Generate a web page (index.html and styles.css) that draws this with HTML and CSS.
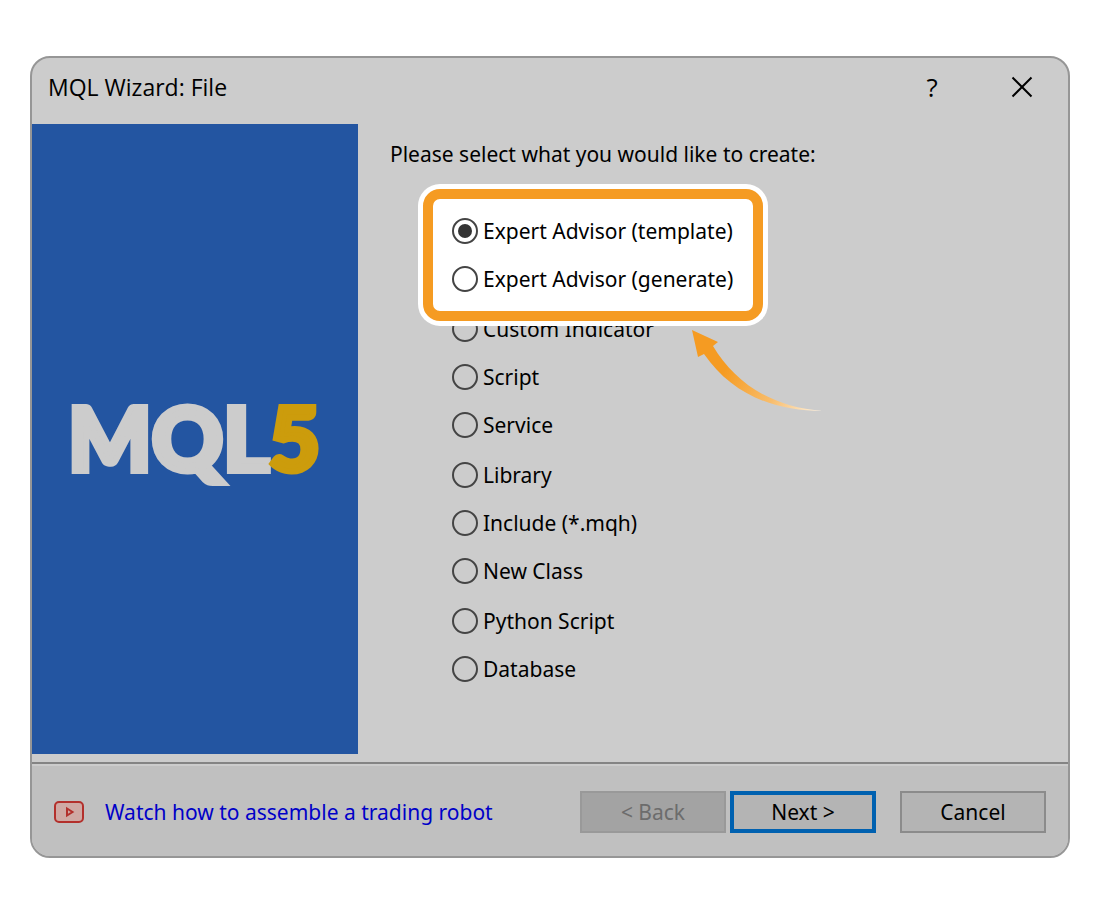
FILE: index.html
```html
<!DOCTYPE html>
<html lang="en">
<head>
    <meta charset="UTF-8">
    <meta name="viewport" content="width=device-width, initial-scale=1.0">
    <title>MQL Wizard: File</title>
    <link rel="stylesheet" href="styles.css">
</head>
<body>
    <form class="wizard">
        <header class="title-bar">
            <h1>MQL Wizard: File</h1>
            <button type="button" class="title-button help">?</button>
            <button type="button" class="title-button" aria-label="Close">
                <svg width="22" height="22" viewBox="0 0 22 22"><path d="M1.500 1.500L20.500 20.500M20.500 1.500L1.500 20.500" stroke="#000" stroke-width="2"/></svg>
            </button>
        </header>

        <main class="content">
            <div class="banner">
                <svg class="logo" viewBox="0 0 248 76" role="img" aria-label="MQL5">
                    <text class="logo-text" x="-3" y="70">MQL<tspan class="logo-five">5</tspan></text>
                </svg>
            </div>

            <fieldset class="choices">
                <legend>Please select what you would like to create:</legend>
                <div class="options">
                    <div class="highlighted">
                        <label class="option"><input type="radio" name="kind" checked>Expert Advisor (template)</label>
                        <label class="option"><input type="radio" name="kind">Expert Advisor (generate)</label>
                    </div>
                    <div class="others">
                        <label class="option"><input type="radio" name="kind">Custom Indicator</label>
                        <label class="option"><input type="radio" name="kind">Script</label>
                        <label class="option"><input type="radio" name="kind">Service</label>
                        <label class="option"><input type="radio" name="kind">Library</label>
                        <label class="option"><input type="radio" name="kind">Include (*.mqh)</label>
                        <label class="option"><input type="radio" name="kind">New Class</label>
                        <label class="option"><input type="radio" name="kind">Python Script</label>
                        <label class="option"><input type="radio" name="kind">Database</label>
                    </div>
                    <svg class="arrow" width="132" height="82" viewBox="0 0 132 82" aria-hidden="true">
                        <defs>
                            <linearGradient id="fade" gradientUnits="userSpaceOnUse" x1="10" y1="10" x2="130" y2="82">
                                <stop offset="0.25" stop-color="#f59b22"/>
                                <stop offset="0.65" stop-color="#f8bd6c"/>
                                <stop offset="1" stop-color="#fff4e4"/>
                            </linearGradient>
                        </defs>
                        <path d="M0 0L26 12L21 16C42 51 77 77 131 81C80 81 39 63 12 24L6 27Z" fill="url(#fade)"/>
                    </svg>
                </div>
            </fieldset>
        </main>

        <footer class="footer">
            <svg width="30" height="22" viewBox="0 0 30 22" aria-hidden="true">
                <rect x="1" y="1" width="28" height="20" rx="4" fill="#cfa9a4" stroke="#b3302c" stroke-width="2"/>
                <path d="M13 7.500V14.500L18.500 11Z" fill="#cfa9a4" stroke="#b3302c" stroke-width="2"/>
            </svg>
            <a href="#">Watch how to assemble a trading robot</a>
            <div class="buttons">
                <button type="button" disabled>&lt; Back</button>
                <button type="submit" class="next">Next &gt;</button>
                <button type="button" class="cancel">Cancel</button>
            </div>
        </footer>
    </form>
</body>
</html>
```

FILE: styles.css
```css
* {
    box-sizing: border-box;
}

body {
    margin: 56px 30px;
    background: #fff;
    color: #000;
    font-family: "Noto Sans", Tahoma, sans-serif;
    font-size: 21px;
    line-height: 28px;
}

.wizard {
    background: #ccc;
    border: 2px solid #969696;
    border-radius: 20px;
    overflow: hidden;
}

.title-bar {
    display: flex;
    align-items: center;
    height: 66px;
    padding: 0 31px 8px 16px;
}

.title-bar h1 {
    flex: 1;
    margin: 0;
    font-family: "Open Sans", "Segoe UI", sans-serif;
    font-size: 23px;
    font-weight: normal;
}

.title-button {
    display: flex;
    align-items: center;
    justify-content: center;
    width: 30px;
    height: 30px;
    padding: 0;
    border: none;
    background: none;
    color: #000;
}

.help {
    margin-right: 60px;
    font-family: "Open Sans", "Segoe UI", sans-serif;
    font-size: 26px;
    font-weight: 500;
}

.content {
    display: flex;
    min-height: 630px;
    margin-bottom: 8px;
}

.banner {
    flex: 0 0 326px;
    display: flex;
    align-items: center;
    justify-content: center;
    background: #2355a1;
}

.logo {
    width: 248px;
    height: 76px;
    overflow: visible;
}

.logo-text {
    fill: #ccc;
    stroke: #ccc;
    stroke-width: 6px;
    font-family: Lato, sans-serif;
    font-size: 88px;
    font-weight: 900;
}

.logo-five {
    fill: #cc9c0c;
    stroke: #cc9c0c;
}

.choices {
    flex: 1;
    margin: 0;
    padding: 16px 32px 0;
    border: none;
}

.choices legend {
    float: left;
    width: 100%;
    padding: 0;
}

.options {
    position: relative;
    clear: both;
    margin-left: 62px;
    padding-top: 39px;
}

.option {
    display: flex;
    align-items: center;
    gap: 5px;
    width: max-content;
    height: 48px;
}

.option input {
    appearance: none;
    display: grid;
    place-items: center;
    width: 26px;
    height: 26px;
    margin: 0;
    border: 2px solid #444;
    border-radius: 50%;
}

.option input:checked::before {
    content: "";
    width: 14px;
    height: 14px;
    border-radius: 50%;
    background: #333;
}

.others .option:nth-child(3n + 1) {
    margin-top: 2px;
}

.highlighted {
    position: relative;
    z-index: 1;
    width: max-content;
}

.highlighted::before {
    content: "";
    position: absolute;
    z-index: -1;
    inset: -18px -30px -18px -29px;
    border: 10px solid #f59b22;
    border-radius: 17px;
    background: #fff;
    box-shadow: 0 0 0 5px #fff;
}

.arrow {
    position: absolute;
    left: 240px;
    top: 162px;
}

.footer {
    display: flex;
    align-items: center;
    gap: 21px;
    height: 94px;
    padding: 4px 22px 0;
    border-top: 2px solid #848484;
    background: #c0c0c0;
    box-shadow: inset 0 2px #ccc;
}

.footer a {
    color: #0000c8;
    text-decoration: none;
}

.buttons {
    display: flex;
    gap: 4px;
    margin-left: auto;
}

.buttons button {
    width: 146px;
    height: 42px;
    padding: 0;
    border: 2px solid #8b8b8b;
    background: #b4b4b4;
    color: #000;
    font: inherit;
}

.buttons button:disabled {
    border-color: #999;
    background: #a3a3a3;
    color: #6c6c6c;
}

.buttons .next {
    border: 4px solid #0061b0;
}

.buttons .cancel {
    margin-left: 20px;
}
```
